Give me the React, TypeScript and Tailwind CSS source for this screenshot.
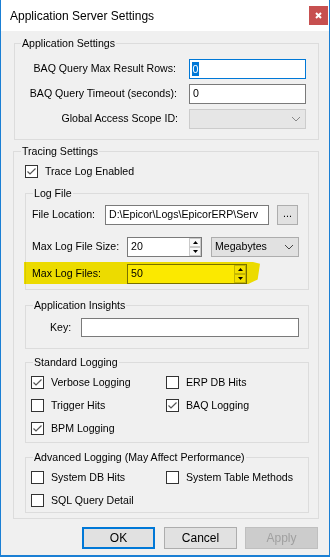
/**
 * Application Server Settings dialog
 * Windows-style form recreated with plain flex/grid + fieldsets
 */

const font = "font-['Liberation_Sans',Arial,sans-serif]";

function Tick() {
  return (
    <svg width="11" height="11" viewBox="0 0 11 11">
      <polyline points="1.5,5.5 4,8 9.5,2.5" fill="none" stroke="#555" strokeWidth="1.2" />
    </svg>
  );
}

function CheckRow({ label, checked }: { label: string; checked?: boolean }) {
  return (
    <div className="flex items-center h-[13px] gap-[7px]">
      <div className="w-[13px] h-[13px] border border-[#333] bg-white flex items-center justify-center shrink-0">
        {checked && <Tick />}
      </div>
      <span className="leading-[13px] whitespace-nowrap">{label}</span>
    </div>
  );
}

function Chevron({ color = "#444" }: { color?: string }) {
  return (
    <svg width="10" height="6" viewBox="0 0 10 6">
      <polyline points="1,1 5,5 9,1" fill="none" stroke={color} strokeWidth="1" />
    </svg>
  );
}

function Spinner() {
  return (
    <div className="w-[12px] h-full flex flex-col shrink-0">
      <div className="flex-1 border border-[#c9c9c9] bg-[#f7f7f7] flex items-center justify-center">
        <svg width="5" height="3" viewBox="0 0 5 3">
          <polygon points="0,3 2.5,0 5,3" fill="#000" />
        </svg>
      </div>
      <div className="flex-1 border border-[#c9c9c9] bg-[#f7f7f7] flex items-center justify-center">
        <svg width="5" height="3" viewBox="0 0 5 3">
          <polygon points="0,0 2.5,3 5,0" fill="#000" />
        </svg>
      </div>
    </div>
  );
}

function Legend({ children, className }: { children: string; className: string }) {
  return <legend className={`px-[1px] leading-[13px] ${className}`}>{children}</legend>;
}

export default function App() {
  return (
    <div className={`${font} text-[10.6px] text-black w-[330px] h-[557px] flex flex-col border-x border-b-2 border-[#1a7fd4] bg-[#f0f0f0]`}>
      {/* title bar */}
      <div className="h-[31px] bg-white flex items-center justify-between pl-[9px] shrink-0">
        <span className="text-[12px]">Application Server Settings</span>
        <div className="w-[19px] h-[19px] mr-[1px] bg-[#c75050] flex items-center justify-center">
          <svg width="7" height="7" viewBox="0 0 7 7">
            <path d="M1 1 L6 6 M6 1 L1 6" stroke="#fff" strokeWidth="2" />
          </svg>
        </div>
      </div>

      {/* Application Settings */}
      <fieldset className="ml-[13px] mt-[6px] w-[305px] h-[103px] border border-[#dcdcdc] shrink-0">
        <Legend className="ml-[6px]">Application Settings</Legend>
        <div className="pt-[9px] flex flex-col gap-[5px]">
          <div className="flex items-center h-[20px]">
            <span className="w-[161px] text-right">BAQ Query Max Result Rows:</span>
            <div className="ml-[13px] w-[117px] h-[20px] border border-[#0078d7] bg-white flex items-center pl-[2px]">
              <span className="bg-[#0078d7] text-white leading-[14px] px-[0.5px]">0</span>
            </div>
          </div>
          <div className="flex items-center h-[20px]">
            <span className="w-[162px] text-right">BAQ Query Timeout (seconds):</span>
            <div className="ml-[12px] w-[117px] h-[20px] border border-[#7a7a7a] bg-white flex items-center pl-[3px]">
              0
            </div>
          </div>
          <div className="flex items-center h-[20px]">
            <span className="w-[163px] text-right">Global Access Scope ID:</span>
            <div className="ml-[11px] w-[117px] h-[20px] border border-[#cccccc] bg-[#e6e6e6] flex items-center justify-end pr-[4px]">
              <Chevron color="#888" />
            </div>
          </div>
        </div>
      </fieldset>

      {/* Tracing Settings */}
      <fieldset className="ml-[12px] mt-[5px] w-[306px] h-[374px] border border-[#dcdcdc] shrink-0">
        <Legend className="ml-[7px]">Tracing Settings</Legend>
        <div className="ml-[11px] mt-[7px]">
          <CheckRow label="Trace Log Enabled" checked />
        </div>

        {/* Log File */}
        <fieldset className="ml-[11px] mt-[9px] w-[284px] h-[103px] border border-[#dcdcdc]">
          <Legend className="ml-[7px]">Log File</Legend>
          <div className="flex items-center h-[20px] mt-[5px] pl-[6px]">
            <span className="w-[73px]">File Location:</span>
            <div className="w-[164px] h-[20px] border border-[#7a7a7a] bg-white flex items-center pl-[3px] overflow-hidden whitespace-nowrap">
              D:\Epicor\Logs\EpicorERP\Serv
            </div>
            <div className="ml-[8px] w-[21px] h-[20px] border border-[#adadad] bg-[#e1e1e1] flex items-center justify-center leading-none pb-[3px]">
              ...
            </div>
          </div>
          <div className="flex items-center h-[20px] mt-[12px] pl-[6px]">
            <span className="w-[95px]">Max Log File Size:</span>
            <div className="w-[75px] h-[20px] border border-[#7a7a7a] bg-white flex items-center">
              <span className="flex-1 pl-[3px]">20</span>
              <Spinner />
            </div>
            <div className="ml-[9px] w-[88px] h-[20px] border border-[#adadad] bg-[#e1e1e1] flex items-center justify-between pl-[3px] pr-[4px]">
              <span>Megabytes</span>
              <Chevron />
            </div>
          </div>
          <div className="relative flex items-center h-[20px] mt-[7px] pl-[6px]">
            <span className="w-[95px]">Max Log Files:</span>
            <div className="w-[120px] h-[20px] border border-[#7a7a7a] bg-white flex items-center">
              <span className="flex-1 pl-[3px]">50</span>
              <Spinner />
            </div>
            {/* marker highlight */}
            <div className="absolute left-[-2px] top-[-2px] w-[236px] h-[22px] bg-[#fbe900] mix-blend-multiply [clip-path:polygon(0_0,97%_0,100%_8%,99%_80%,95%_100%,0_100%)]" />
          </div>
        </fieldset>

        {/* Application Insights */}
        <fieldset className="ml-[11px] mt-[9px] w-[284px] h-[50px] border border-[#dcdcdc]">
          <Legend className="ml-[7px]">Application Insights</Legend>
          <div className="flex items-center h-[19px] mt-[6px] pl-[24px]">
            <span className="w-[31px]">Key:</span>
            <div className="w-[218px] h-[19px] border border-[#7a7a7a] bg-white" />
          </div>
        </fieldset>

        {/* Standard Logging */}
        <fieldset className="ml-[11px] mt-[7px] w-[284px] h-[87px] border border-[#dcdcdc]">
          <Legend className="ml-[7px]">Standard Logging</Legend>
          <div className="grid grid-cols-[135px_auto] gap-y-[10px] pt-[7px] pl-[5px]">
            <CheckRow label="Verbose Logging" checked />
            <CheckRow label="ERP DB Hits" />
            <CheckRow label="Trigger Hits" />
            <CheckRow label="BAQ Logging" checked />
            <CheckRow label="BPM Logging" checked />
          </div>
        </fieldset>

        {/* Advanced Logging */}
        <fieldset className="ml-[11px] mt-[8px] w-[284px] h-[62px] border border-[#dcdcdc]">
          <Legend className="ml-[7px]">Advanced Logging (May Affect Performance)</Legend>
          <div className="grid grid-cols-[135px_auto] gap-y-[10px] pt-[7px] pl-[5px]">
            <CheckRow label="System DB Hits" />
            <CheckRow label="System Table Methods" />
            <CheckRow label="SQL Query Detail" />
          </div>
        </fieldset>
      </fieldset>

      {/* dialog buttons */}
      <div className="flex justify-end items-center mt-[8px] pr-[11px] h-[22px] shrink-0">
        <button className="w-[73px] h-[22px] border-2 border-[#0078d7] bg-[#e1e1e1] text-[12px]">OK</button>
        <button className="ml-[9px] w-[73px] h-[22px] border border-[#adadad] bg-[#e1e1e1] text-[12px]">Cancel</button>
        <button className="ml-[8px] w-[73px] h-[22px] border border-[#bfbfbf] bg-[#cccccc] text-[12px] text-[#a0a0a0]">Apply</button>
      </div>
    </div>
  );
}
